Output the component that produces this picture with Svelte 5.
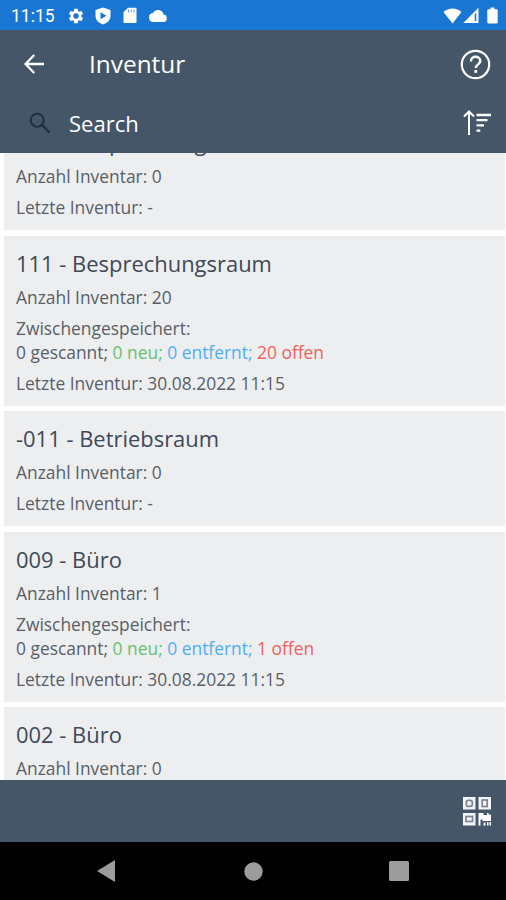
<script>
    let rooms = [
        { name: '110 - Besprechungsraum', count: 0, last: '-' },
        { name: '111 - Besprechungsraum', count: 20, last: '30.08.2022 11:15', cached: { scanned: 0, added: 0, removed: 0, open: 20 } },
        { name: '-011 - Betriebsraum', count: 0, last: '-' },
        { name: '009 - Büro', count: 1, last: '30.08.2022 11:15', cached: { scanned: 0, added: 0, removed: 0, open: 1 } },
        { name: '002 - Büro', count: 0, last: '-' }
    ];
</script>

<div class="screen">
    <div class="status">
        <span class="time">11:15</span>
        <svg class="gear" width="18" height="18" viewBox="0 0 24 24" fill="#fff"><path d="M19.14 12.94c.04-.3.06-.61.06-.94s-.02-.64-.07-.94l2.03-1.58a.49.49 0 0 0 .12-.61l-1.92-3.32a.49.49 0 0 0-.59-.22l-2.39.96c-.5-.38-1.03-.7-1.62-.94l-.36-2.54a.48.48 0 0 0-.48-.41h-3.84a.48.48 0 0 0-.47.41l-.36 2.54c-.59.24-1.13.57-1.62.94l-2.39-.96a.48.48 0 0 0-.59.22L2.74 8.87a.48.48 0 0 0 .12.61l2.03 1.58a6 6 0 0 0 0 1.88l-2.03 1.58a.49.49 0 0 0-.12.61l1.92 3.32c.12.22.37.29.59.22l2.39-.96c.5.38 1.03.7 1.62.94l.36 2.54c.05.24.24.41.48.41h3.84c.24 0 .44-.17.47-.41l.36-2.54c.59-.24 1.13-.56 1.62-.94l2.39.96c.22.08.47 0 .59-.22l1.92-3.32a.48.48 0 0 0-.12-.61zM12 15.6a3.6 3.6 0 1 1 0-7.2 3.6 3.6 0 0 1 0 7.2z" /></svg>
        <svg class="shield" width="16" height="18" viewBox="0 0 16 18"><path d="M8 .5 15.500 3v6c0 4-3 7-7.500 8.500C3.500 16 .5 13 .5 9V3z" fill="#fff" /><path d="M5.500 5.300v7L11.500 8.800z" fill="#1976d2" /></svg>
        <svg class="card-icon" width="14" height="17" viewBox="0 0 14 17"><path d="M5 .8h7.200c.8 0 1.300.5 1.300 1.300v12.600c0 .8-.5 1.300-1.300 1.300H1.800c-.8 0-1.300-.5-1.300-1.300V5.300z" fill="#fff" /><path d="M5.500 2.500v3M8.200 2.500v3M10.900 2.500v3" stroke="#1976d2" stroke-width="1" opacity=".7" /></svg>
        <svg class="cloud" width="18" height="12" viewBox="0 0 24 16"><path d="M19.350 6.040A7.490 7.490 0 0 0 12 0C9.110 0 6.600 1.640 5.350 4.040A6 6 0 0 0 6 16h13a5 5 0 0 0 .35-9.960z" fill="#fff" /></svg>
        <svg class="wifi" width="19" height="17" viewBox="0 0 19 17"><path d="M9.500 16.500.5 5C5.500.2 13.500.2 18.500 5z" fill="#fff" /></svg>
        <svg class="signal" width="16" height="17" viewBox="0 0 16 17"><path d="M15.500.8V16H.3z" fill="#fff" /><path d="M12.500 6.500V14" stroke="#1976d2" stroke-width="1.600" /></svg>
        <svg class="battery" width="11" height="17" viewBox="0 0 11 17"><path d="M3.500.5h4v1.700h2c.7 0 1.200.5 1.200 1.200v11.900c0 .7-.5 1.200-1.200 1.200h-8c-.7 0-1.200-.5-1.200-1.200V3.400c0-.7.500-1.200 1.200-1.200h2z" fill="#fff" /></svg>
    </div>

    <header>
        <div class="bar">
            <svg width="20" height="20" viewBox="0 0 20 20" fill="none" stroke="#fff" stroke-width="2.300"><path d="M20 10H2M10.200 1 1.500 10l8.700 9" /></svg>
            <h1>Inventur</h1>
            <svg width="31" height="31" viewBox="0 0 31 31" fill="none" stroke="#fff"><circle cx="15.500" cy="15.500" r="13.700" stroke-width="2.200" /><path d="M10.900 12.400c0-6.300 9.400-5.800 9.400-.4 0 3.200-4.500 3.600-4.500 7" stroke-width="2.500" /><path d="M15.800 21v2.800" stroke-width="2.800" /></svg>
        </div>
        <div class="search">
            <svg width="22" height="22" viewBox="0 0 22 22" fill="none" stroke="#202f40" stroke-width="2"><circle cx="8.200" cy="8.200" r="6.500" /><path d="m13 13 7.500 7.500" stroke-width="2.300" /></svg>
            <span>Search</span>
            <svg width="28" height="26" viewBox="0 0 28 26" fill="none" stroke="#fff"><path d="M6 25V2M1 6.500 6 1.500l5 5" stroke-width="2" /><path d="M13.500 5H28M13.500 10.200h11M13.500 15.400h7.500M13.500 20.600h3.800" stroke-width="2.300" /></svg>
        </div>
    </header>

    <main>
        <div class="rooms">
            {#each rooms as room}
                <section>
                    <h2>{room.name}</h2>
                    <p>Anzahl Inventar: {room.count}</p>
                    {#if room.cached}
                        <p>
                            Zwischengespeichert:<br />
                            {room.cached.scanned} gescannt;
                            <span class="added">{room.cached.added} neu;</span>
                            <span class="removed">{room.cached.removed} entfernt;</span>
                            <span class="open">{room.cached.open} offen</span>
                        </p>
                    {/if}
                    <p>Letzte Inventur: {room.last}</p>
                </section>
            {/each}
        </div>
    </main>

    <footer>
        <svg width="28" height="29" viewBox="0 0 28 29">
            <path d="M0 0h12.500v12.500H0zM15.500 0H28v12.500H15.500zM0 16h12.500v12.500H0z" fill="#f2f5f9" />
            <g fill="none" stroke="#7b8591" stroke-width="1.700">
                <rect x="3.300" y="3.300" width="6" height="6" rx="2" />
                <rect x="19.200" y="3" width="5" height="6.500" />
                <rect x="3" y="19.500" width="6.500" height="5" />
            </g>
            <path d="M15.500 16h5v2H24v-2h1.500v1.500H28V24h-8.500v-1.500h-2v6h-2zM20.500 25.500h2v3h-2zM24 25h1.500v3.500H24zM26.500 25H28v3.500h-1.500z" fill="#fff" />
        </svg>
    </footer>

    <nav>
        <svg width="18" height="22" viewBox="0 0 18 22"><path d="M18 0v22L0 11z" fill="#9c9c9c" /></svg>
        <svg class="home" width="19" height="19" viewBox="0 0 19 19"><circle cx="9.500" cy="9.500" r="9.200" fill="#9c9c9c" /></svg>
        <svg width="20" height="20" viewBox="0 0 20 20"><rect width="20" height="20" rx="1.500" fill="#9c9c9c" /></svg>
    </nav>
</div>

<style>
    :global(body) {
        margin: 0;
        background: #fff;
    }
    .screen {
        display: flex;
        flex-direction: column;
        height: 900px;
        overflow: hidden;
        font-family: 'Open Sans', sans-serif;
    }
    svg {
        display: block;
        flex: none;
    }
    .status {
        display: flex;
        align-items: center;
        height: 30px;
        box-sizing: border-box;
        padding: 1px 8px 0 11px;
        background: #1976d2;
        color: #fff;
    }
    .time {
        width: 56px;
        font: 17.500px/28px Roboto, sans-serif;
    }
    .shield {
        margin-left: 10px;
    }
    .card-icon {
        margin-left: 12px;
    }
    .cloud {
        margin-left: 12px;
    }
    .wifi {
        margin-left: auto;
    }
    .signal {
        margin-left: 1px;
    }
    .battery {
        margin-left: 8px;
    }
    header {
        flex: none;
        height: 123px;
        background: #455668;
        color: #fff;
    }
    .bar {
        display: flex;
        align-items: center;
        height: 68px;
        padding: 0 15px 0 24px;
    }
    h1 {
        flex: 1;
        margin: 0 0 0 45px;
        font-size: 24.400px;
        line-height: 34px;
        font-weight: 400;
    }
    .search {
        display: flex;
        align-items: center;
        height: 50px;
        padding: 0 15px 0 29px;
        font-size: 22px;
        line-height: 28px;
    }
    .search span {
        flex: 1;
        margin-left: 18px;
    }
    main {
        flex: none;
        height: 627px;
        overflow: hidden;
    }
    /* the list is scrolled a little, the first room is cut off */
    .rooms {
        display: flex;
        flex-direction: column;
        gap: 5.400px;
        margin-top: -37.600px;
        padding: 0 1px 0 4px;
    }
    section {
        box-sizing: border-box;
        padding: 13px 12px 11px;
        background: #eceef0;
    }
    h2 {
        margin: 0;
        font-size: 21.950px;
        line-height: 29px;
        font-weight: 400;
        color: #404957;
    }
    p {
        margin: 7px 0 0;
        font-size: 17.400px;
        line-height: 24px;
        font-weight: 400;
        color: #595f68;
    }
    .added {
        color: #6abf6e;
    }
    .removed {
        color: #50aff5;
    }
    .open {
        color: #f2605d;
    }
    footer {
        display: flex;
        align-items: center;
        justify-content: flex-end;
        flex: none;
        height: 62px;
        padding-right: 15px;
        background: #455668;
    }
    nav {
        display: flex;
        align-items: center;
        justify-content: space-between;
        flex: 1;
        padding: 0 97px;
        background: #000;
    }
    .home {
        margin-left: 2px;
    }
</style>
